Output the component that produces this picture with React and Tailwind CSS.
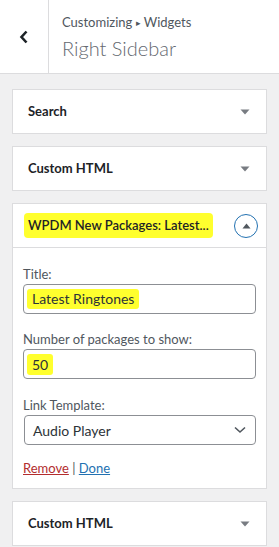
import React from 'react';

const font = { fontFamily: 'Lato, "Noto Sans", Arial, sans-serif' };

const Caret = () => (
  <svg width="10" height="6" viewBox="0 0 10 6" className="shrink-0">
    <path d="M0.5 0.5 L9.5 0.5 L5 5.5 Z" fill="#787c82" />
  </svg>
);

const Collapsed = ({ title }) => (
  <div className="h-[45px] bg-white border border-[#dcdcde] flex items-center justify-between pl-[15px] pr-[16px]">
    <span className="text-[13px] font-bold text-[#1d2327] leading-none">{title}</span>
    <Caret />
  </div>
);

const Field = ({ label, children, className = '' }) => (
  <div className={className}>
    <div className="text-[13px] leading-[18px] h-[19px] text-[#50575e]">{label}</div>
    {children}
  </div>
);

const App = () => {
  return (
    <div className="w-[279px] h-[547px] bg-[#f0f0f1] overflow-hidden" style={font}>
      {/* header */}
      <div className="h-[74px] bg-white border-b border-[#dcdcde] flex">
        <div className="w-[49px] border-r border-[#dcdcde] flex items-center justify-center">
          <svg width="10" height="14" viewBox="0 0 10 14">
            <polyline points="7.5,1.5 2.5,7 7.5,12.5" fill="none" stroke="#1d2327" strokeWidth="2.6" />
          </svg>
        </div>
        <div className="pl-[13px] pt-[13px] flex flex-col">
          <div className="text-[13px] leading-[18px] text-[#50575e]">
            Customizing <span className="text-[9px] relative -top-[1px]">▸</span> Widgets
          </div>
          <div className="text-[20px] leading-[26px] font-light text-[#646970] mt-[2px]">Right Sidebar</div>
        </div>
      </div>

      <div className="px-[12px] pt-[15px] flex flex-col gap-[12px]">
        <Collapsed title="Search" />
        <Collapsed title="Custom HTML" />

        {/* expanded widget */}
        <div className="bg-white border border-[#dcdcde]">
          <div className="h-[44px] border-b border-[#dcdcde] flex items-center justify-between pl-[11px] pr-[8px]">
            <span className="whitespace-nowrap bg-[#ffff2e] rounded-[4px] px-[4px] py-[3px] text-[13px] leading-[19px] font-semibold text-[#1d2327]">
              WPDM New Packages: Latest...
            </span>
            <div className="w-[24px] h-[24px] rounded-full border border-[#2271b1] flex items-center justify-center">
              <svg width="9" height="6" viewBox="0 0 9 6">
                <path d="M0.5 5.5 L8.5 5.5 L4.5 0.5 Z" fill="#50575e" />
              </svg>
            </div>
          </div>

          <div className="px-[10px] pt-[17px] pb-[10px]">
            <Field label="Title:">
              <div className="h-[30px] border border-[#8c8f94] rounded-[4px] flex items-center pl-[3px]">
                <span className="bg-[#ffff2e] rounded-[3px] px-[5px] text-[14px] leading-[20px] text-[#2c3338]">
                  Latest Ringtones
                </span>
              </div>
            </Field>
            <Field label="Number of packages to show:" className="mt-[16px]">
              <div className="h-[30px] border border-[#8c8f94] rounded-[4px] flex items-center pl-[3px]">
                <span className="bg-[#ffff2e] rounded-[3px] px-[5px] text-[14px] leading-[21px] text-[#2c3338]">50</span>
              </div>
            </Field>
            <Field label="Link Template:" className="mt-[17px]">
              <div className="h-[30px] ml-[1px] border border-[#8c8f94] rounded-[4px] flex items-center justify-between pl-[8px] pr-[9px]">
                <span className="text-[14px] text-[#2c3338]">Audio Player</span>
                <svg width="12" height="8" viewBox="0 0 12 8">
                  <polyline points="1,1.5 6,6 11,1.5" fill="none" stroke="#50575e" strokeWidth="1.6" />
                </svg>
              </div>
            </Field>
            <div className="mt-[13px] text-[13px] leading-[20px] text-[#50575e]">
              <a className="text-[#b32d2e] underline">Remove</a> | <a className="text-[#2271b1] underline">Done</a>
            </div>
          </div>
        </div>

        <Collapsed title="Custom HTML" />
      </div>
    </div>
  );
};

export default App;
